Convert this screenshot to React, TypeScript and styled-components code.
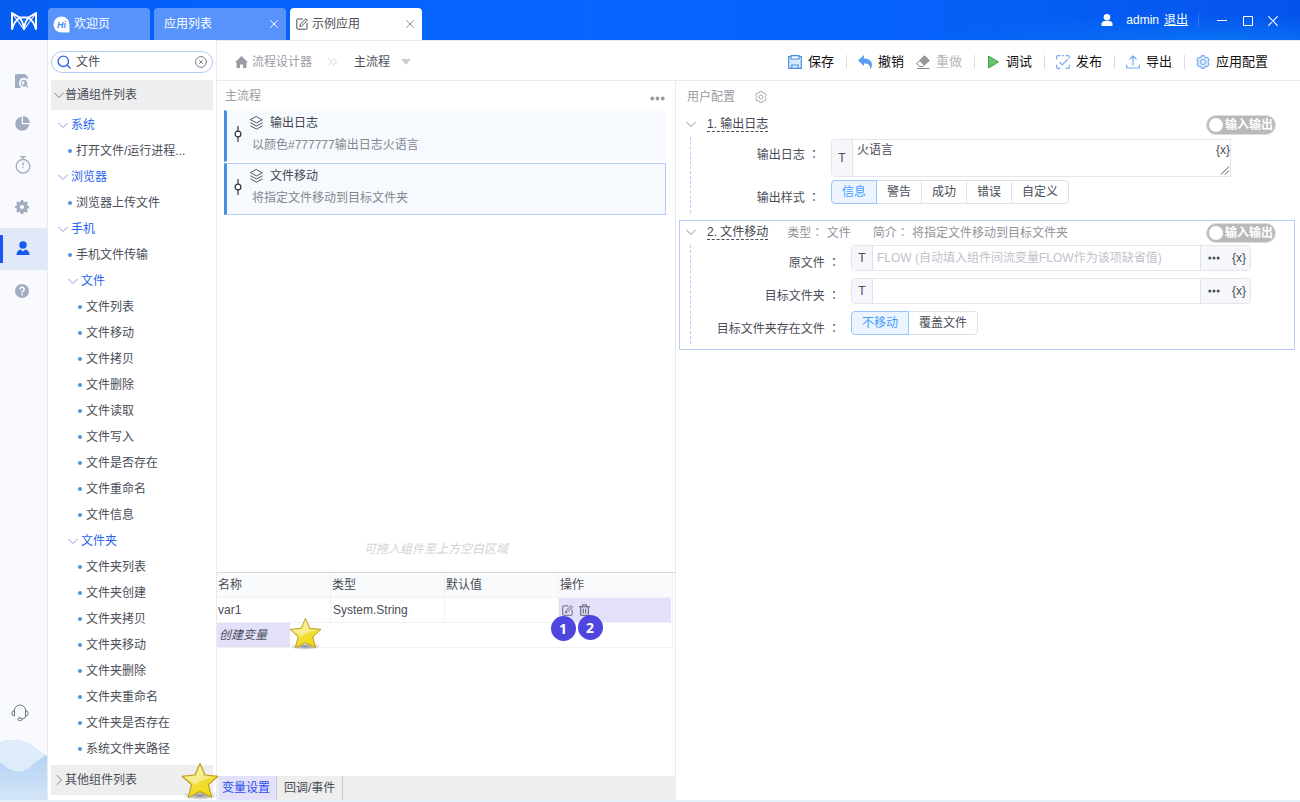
import React, { useState } from "react";
import styled, { createGlobalStyle, css } from "styled-components";

const Global = createGlobalStyle`
  *, *::before, *::after { box-sizing: border-box; }
  body {
    margin: 0;
    background: #fff;
    color: #4a4d57;
    font: 12px/20px "Liberation Sans", "Noto Sans CJK SC", sans-serif;
  }
  button, input, textarea { font: inherit; color: inherit; }
  button { margin: 0; padding: 0; border: 0; background: none; cursor: pointer; }
  ul { list-style: none; margin: 0; padding: 0; }
  h2, h3, p { margin: 0; font: inherit; }
  svg { display: block; flex: none; }
`;

/* ---------- window frame ---------- */

const Page = styled.div`
  display: flex;
  flex-direction: column;
  min-height: 100vh;
  border-bottom: 2px solid #e6f2fa;
`;

const TopBar = styled.header`
  display: flex;
  height: 40px;
  color: #fff;
  background:
    radial-gradient(ellipse 300px 30px at 94% 110%, #0a74f4 0%, transparent 100%),
    linear-gradient(90deg, #075cf0 0%, #0560fb 12%, #0666fd 45%, #0560f8 75%, #0553ec 100%);
`;

const Logo = styled.div`
  display: flex;
  align-items: center;
  width: 48px;
  padding: 2px 0 0 10px;
`;

const WindowTabs = styled.nav`
  display: flex;
  align-items: flex-end;
  gap: 4px;
`;

const WindowTab = styled.div<{ $active?: boolean; $narrow?: boolean }>`
  display: flex;
  align-items: center;
  gap: 4px;
  width: ${(p) => (p.$narrow ? 102 : 132)}px;
  height: 32px;
  padding: 0 8px 0 ${(p) => (p.$active ? 6 : p.$narrow ? 5 : 10)}px;
  border-radius: 4px 4px 0 0;
  background: ${(p) => (p.$active ? "#fff" : "#5793fb")};
  color: ${(p) => (p.$active ? "#4a4d57" : "#fff")};
`;

const TabClose = styled.button<{ $warm?: boolean }>`
  margin-left: auto;
  color: ${(p) => (p.$warm ? "#a0917c" : "#fff")};
`;

const Account = styled.div`
  display: flex;
  align-items: center;
  margin-left: auto;
  padding-right: 22px;
`;

const AccountName = styled.span`
  margin: 0 5px 0 13px;
`;

const LogoutLink = styled.a`
  color: #fff;
  text-decoration: underline;
`;

const WindowButtons = styled.div`
  display: flex;
  gap: 14px;
  margin-left: 10px;
  padding: 2px 0 0 17px;
  border-left: 1px solid #2f77f5;
`;

/* ---------- body ---------- */

const Body = styled.div`
  display: flex;
  flex: 1;
`;

const Rail = styled.nav`
  display: flex;
  flex-direction: column;
  flex: 0 0 48px;
  padding-top: 20px;
  border-right: 1px solid #ebebee;
  background: #f8fafd;
`;

const RailButton = styled.button<{ $active?: boolean }>`
  position: relative;
  display: flex;
  align-items: center;
  height: 42px;
  padding-left: 15px;
  color: ${(p) => (p.$active ? "#1759f0" : "#a3adc2")};
  background: ${(p) => (p.$active ? "#e1e8f8" : "transparent")};
  ${(p) =>
    p.$active &&
    css`
      &::before {
        content: "";
        position: absolute;
        left: 0;
        top: 7px;
        width: 3px;
        height: 28px;
        background: #1759f0;
      }
    `}
`;

const SupportButton = styled.button`
  margin: auto 0 18px;
  padding-left: 11px;
  color: #6d7484;
`;

const Library = styled.aside`
  display: flex;
  flex-direction: column;
  flex: none;
  width: 169px;
  padding: 11px 3px 5px;
  border-right: 1px solid #ebebee;
`;

const SearchBox = styled.label`
  display: flex;
  align-items: center;
  height: 22px;
  padding: 0 5px;
  border: 1px solid #b1cbfb;
  border-radius: 11px;
`;

const SearchInput = styled.input`
  flex: 1;
  min-width: 0;
  padding: 0 5px;
  border: 0;
  outline: 0;
  background: none;
`;

const LibraryHeading = styled.button<{ $end?: boolean }>`
  position: relative;
  display: flex;
  align-items: center;
  gap: 1px;
  height: 30px;
  margin-top: ${(p) => (p.$end ? "auto" : "7px")};
  padding-left: 3px;
  background: #eee;
  flex: none;
  svg { color: #7c7f88; }
`;

const Tree = styled.ul`
  padding: 2px 0 3px;
`;

const Branch = styled.li<{ $deep?: boolean }>`
  display: flex;
  align-items: center;
  gap: 3px;
  height: 26px;
  padding-left: ${(p) => (p.$deep ? 17 : 7)}px;
  color: #2a63ee;
  svg { color: #9a8fe0; }
`;

const Leaf = styled.li<{ $deep?: boolean }>`
  display: flex;
  align-items: center;
  gap: 4px;
  height: 26px;
  padding-left: ${(p) => (p.$deep ? 27 : 17)}px;
  &::before {
    content: "";
    width: 4px;
    height: 4px;
    border-radius: 50%;
    background: #4b93dd;
  }
`;

const Designer = styled.main`
  display: flex;
  flex-direction: column;
  flex: 1;
  min-width: 0;
`;

const ToolBar = styled.div`
  display: flex;
  align-items: center;
  height: 41px;
  padding: 2px 32px 0 18px;
  border-top: 1px solid #ebebee;
  border-bottom: 1px solid #ebebee;
`;

const Crumbs = styled.nav`
  display: flex;
  align-items: center;
  color: #999ba3;
`;

const CrumbHome = styled.a`
  display: flex;
  align-items: center;
  gap: 4px;
  margin-right: 16px;
  color: inherit;
  text-decoration: none;
`;

const CrumbFlow = styled.button`
  display: flex;
  align-items: center;
  gap: 11px;
  margin-left: 16px;
  color: #4a4d57;
`;

const Actions = styled.div`
  display: flex;
  align-items: center;
  gap: 12px;
  margin-left: auto;
  font-size: 13px;
`;

const Action = styled.button`
  display: flex;
  align-items: center;
  gap: 6px;
  color: #111;
  white-space: nowrap;
  &:disabled { color: #b9b9b9; cursor: default; }
`;

const Divider = styled.span`
  width: 1px;
  height: 14px;
  margin-right: -1px;
  background: #dcdcdc;
`;

const Work = styled.div`
  display: flex;
  flex: 1;
`;

/* ---------- flow column ---------- */

const FlowColumn = styled.section`
  display: flex;
  flex-direction: column;
  flex: none;
  width: 459px;
  border-right: 1px solid #ebebee;
`;

const PaneHeading = styled.div`
  display: flex;
  align-items: center;
  justify-content: space-between;
  height: 29px;
  padding: 0 10px 0 8px;
  color: #999ba3;
`;

const MoreButton = styled.button`
  margin-top: 6px;
`;

const FlowList = styled.ol`
  display: grid;
  gap: 1px;
  margin: 0 9px 0 7px;
  padding: 0;
  list-style: none;
`;

const FlowStep = styled.li<{ $selected?: boolean }>`
  display: flex;
  align-items: center;
  gap: 8px;
  height: 52px;
  padding: 0 0 4px 7px;
  border: 1px solid ${(p) => (p.$selected ? "#b5cdfb" : "#fff")};
  border-left: 3px solid #4c8fdf;
  background: #f6f9fe;
  background-clip: padding-box;
`;

const StepText = styled.div`
  line-height: 22px;
  color: #848790;
`;

const StepTitle = styled.h3`
  display: flex;
  align-items: center;
  gap: 7px;
  color: #42454f;
`;

const StepNote = styled.p`
  padding-left: 2px;
`;

const DropHint = styled.p`
  margin: auto 0 13px;
  padding-right: 20px;
  text-align: center;
  font-style: italic;
  color: #d2d2d2;
`;

const Variables = styled.div`
  flex: 0 0 204px;
  padding-right: 2px;
  border-top: 1px solid #d6d8da;
`;

const VarTable = styled.table`
  width: 100%;
  table-layout: fixed;
  border-collapse: separate;
  border-spacing: 0;
  th, td {
    height: 25px;
    padding: 0 1px;
    border: solid #f1f2f3;
    border-width: 0 1px 1px 0;
    text-align: left;
    font-weight: 400;
  }
  th { background: #f9fafb; }
  td + td { padding-left: 2px; }
`;

const ToolCell = styled.div`
  display: flex;
  align-items: center;
  gap: 6px;
  height: 24px;
  margin-left: -2px;
  padding-left: 3px;
  background: #e3e0fa;
  color: #5c5a6c;
`;

const CreateRow = styled.div`
  position: relative;
  display: flex;
  height: 24px;
  margin-left: -1px;
`;

const CreateButton = styled.button`
  width: 73px;
  padding-left: 2px;
  text-align: left;
  font-style: italic;
  background: #e3e0fa;
`;

const IconButton = styled.button`
  position: relative;
`;

const Badge = styled.span`
  position: absolute;
  left: 50%;
  top: 11px;
  width: 25px;
  height: 25px;
  margin: 0 0 0 -17px;
  border-radius: 50%;
  background: #4f46e0;
  color: #fff;
  text-align: center;
  font: 700 14px/25px "Open Sans", sans-serif;
`;

const SecondBadge = styled(Badge)`
  margin-left: -7px;
`;

const StarSlot = styled.span<{ $corner?: boolean }>`
  position: absolute;
  ${(p) =>
    p.$corner
      ? css`
          right: -6px;
          top: -3px;
        `
      : css`
          left: 72px;
          top: -6px;
        `}
  z-index: 2;
`;

const BottomTabs = styled.div`
  display: flex;
  height: 24px;
  padding-left: 2px;
  background: #eee;
`;

const BottomTab = styled.button<{ $active?: boolean }>`
  padding: 0 ${(p) => (p.$active ? 6 : 7)}px 0 ${(p) => (p.$active ? 3 : 7)}px;
  border-right: 1px solid #c9c9c9;
  background: ${(p) => (p.$active ? "#e3e0fa" : "transparent")};
  color: ${(p) => (p.$active ? "#2a50ee" : "#4a4d57")};
`;

/* ---------- settings column ---------- */

const Settings = styled.section`
  flex: 1;
  min-width: 0;
  padding: 0 5px 0 3px;
`;

const SettingsHeading = styled.div`
  display: flex;
  align-items: center;
  gap: 20px;
  height: 31px;
  padding-left: 8px;
  color: #999ba3;
`;

const Block = styled.section<{ $selected?: boolean }>`
  margin-bottom: 1px;
  padding-bottom: 5px;
  border: 1px solid ${(p) => (p.$selected ? "#b5cdfb" : "transparent")};
`;

const BlockHead = styled.header`
  display: flex;
  align-items: center;
  height: 24px;
  padding: 0 18px 2px 6px;
  color: #92949b;
  & > svg { color: #98907f; }
`;

const BlockTitle = styled.h3`
  margin: 0 19px 0 11px;
  border-bottom: 1px dashed #4a4d57;
  line-height: 14px;
  color: #42454f;
`;

const Fact = styled.span`
  margin-right: 22px;
`;

const Switch = styled.label`
  display: flex;
  align-items: center;
  gap: 1px;
  height: 20px;
  margin: 1px 0 0 auto;
  padding: 0 2px 0 1px;
  border: 1px solid #dcdcdc;
  border-radius: 10px;
  background: #b9b9b9;
  color: #fff;
  font-weight: 700;
  line-height: 18px;
`;

const SwitchKnob = styled.input`
  appearance: none;
  width: 16px;
  height: 16px;
  margin: 0;
  border: 1px solid #b9b9b9;
  border-radius: 50%;
  background: #fff;
`;

const BlockBody = styled.div<{ $gap: number; $inset?: number }>`
  display: grid;
  gap: ${(p) => p.$gap}px;
  margin-left: 10px;
  padding: ${(p) => p.$inset ?? 0}px 0 9px;
  border-left: 1px dashed #b5cdfb;
`;

const Row = styled.div<{ $labelWidth: number; $multiline?: boolean }>`
  display: grid;
  grid-template-columns: ${(p) => p.$labelWidth}px minmax(0, 400px);
  & > :first-child {
    padding-right: 11px;
    text-align: right;
    line-height: ${(p) => (p.$multiline ? 30 : 34)}px;
    height: 24px;
    white-space: nowrap;
  }
`;

const Colon = styled.span`
  font-family: "Noto Sans CJK TC", sans-serif;
`;

const FieldBox = styled.div<{ $multiline?: boolean }>`
  display: flex;
  height: ${(p) => (p.$multiline ? 38 : 26)}px;
  border: 1px solid #e4e6ec;
  border-radius: ${(p) => (p.$multiline ? "4px 0 0 4px" : "4px")};
`;

const TypeButton = styled.button`
  flex: 0 0 21px;
  border-right: 1px solid #dfe2ea;
  border-radius: 3px 0 0 3px;
  background: #f5f7fb;
`;

const TextInput = styled.input`
  flex: 1;
  min-width: 0;
  padding: 0 4px;
  border: 0;
  outline: 0;
  background: none;
  &::placeholder { color: #c0c3cc; opacity: 1; }
`;

const TextArea = styled.textarea`
  flex: 1;
  padding: 0 4px;
  border: 0;
  outline: 0;
  background: none;
  resize: none;
`;

const AreaTools = styled.div`
  display: flex;
  flex-direction: column;
  align-items: flex-end;
  justify-content: space-between;
  padding-bottom: 1px;
`;

const FieldTools = styled.div`
  display: flex;
  align-items: center;
  gap: 12px;
  padding: 0 4px 0 7px;
  border-left: 1px solid #dfe2ea;
  border-radius: 0 3px 3px 0;
  background: #f5f7fb;
`;

const Choices = styled.div`
  display: flex;
  justify-self: start;
  height: 24px;
`;

const Choice = styled.label`
  margin-left: -1px;
  padding: 0 10px;
  border: 1px solid #dfe0e8;
  line-height: 22px;
  cursor: pointer;
  &:first-child { margin-left: 0; border-radius: 4px 0 0 4px; }
  &:last-child { border-radius: 0 4px 4px 0; }
  &:has(input:checked) {
    position: relative;
    border-color: #96c4fb;
    background: #ecf4ff;
    color: #409eff;
  }
`;

const HiddenRadio = styled.input`
  position: absolute;
  appearance: none;
  width: 0;
  height: 0;
  margin: 0;
`;

/* ---------- drawings ---------- */

const line = { fill: "none", stroke: "currentColor", strokeLinecap: "round", strokeLinejoin: "round" } as const;

const Chevron = ({ side }: { side?: boolean }) => (
  <svg width="10" height="10" viewBox="0 0 10 10" {...line}>
    <path d={side ? "M3 .5 7.500 5 3 9.500" : "M.5 3 5 7.500 9.500 3"} />
  </svg>
);

const Cross = ({ size = 8 }: { size?: number }) => (
  <svg width={size} height={size} viewBox="0 0 10 10" {...line} strokeWidth="1.200">
    <path d="M.7.7 9.300 9.300M9.300.7.7 9.300" />
  </svg>
);

const LogoMark = () => (
  <svg width="28" height="20" viewBox="0 0 28 20" fill="none" stroke="#fff" strokeLinejoin="round">
    <path d="M2 18.500V2L9.500 6.500H18.500L26 2V18.500" strokeWidth="2" />
    <path d="M2 18.500Q4.500 9.500 9.500 7 13 10 14 18 15 10 18.500 7 23.500 9.500 26 18.500" strokeWidth="1.800" />
    <path d="M2 2 14 18.500 26 2" strokeWidth="1.200" />
  </svg>
);

const HiMark = () => (
  <svg width="17" height="17" viewBox="0 0 17 17">
    <path fill="#fff" d="M8.500.5a8 8 0 1 0 0 16H15a1.500 1.500 0 0 0 1.500-1.500V8.500a8 8 0 0 0-8-8Z" />
    <text x="4" y="12" fill="#4a8bfa" fontSize="9" fontWeight="700" fontStyle="italic" fontFamily="Liberation Sans, sans-serif">Hi</text>
  </svg>
);

const EditIcon = ({ size = 12 }: { size?: number }) => (
  <svg width={size} height={size} viewBox="0 0 12 12" {...line}>
    <path d="M6.500 1H1.500a.7.7 0 0 0-.7.7v8.800a.7.7 0 0 0 .7.7h8.800a.7.7 0 0 0 .7-.7V5.500" />
    <path d="M4 8.200 4.300 6.200 9.800.8 11.300 2.300 5.900 7.700Z" />
  </svg>
);

const TrashIcon = () => (
  <svg width="11" height="12" viewBox="0 0 11 12" {...line}>
    <path d="M.5 2.800h10M3.500 2.500V.8h4v1.700M1.700 3v8.300h7.600V3M4.300 5v4M6.700 5v4" />
  </svg>
);

const UserIcon = () => (
  <svg width="12" height="12" viewBox="0 0 12 12" fill="#fff">
    <circle cx="6" cy="3.300" r="3.300" />
    <path d="M.5 12V9.800C.5 8 2 7.200 3.500 6.900h5c1.500.3 3 1.100 3 2.900V12Z" />
  </svg>
);

const SearchIcon = () => (
  <svg width="14" height="14" viewBox="0 0 14 14" fill="none" stroke="#2a63ee" strokeWidth="1.400">
    <circle cx="6.300" cy="6.300" r="5.200" />
    <path d="m10.200 10.200 3.300 3.300" />
  </svg>
);

const ClearIcon = () => (
  <svg width="12" height="12" viewBox="0 0 12 12" {...line} stroke="#7b7e87">
    <circle cx="6" cy="6" r="5.400" />
    <path d="m4.500 4.500 3 3M7.500 4.500 4.500 7.500" />
  </svg>
);

const Dots = ({ size = 5 }: { size?: number }) => (
  <svg width={size * 3} height={size} viewBox="0 0 15 5" fill="currentColor">
    <circle cx="2.300" cy="2.500" r="1.900" />
    <circle cx="7.500" cy="2.500" r="1.900" />
    <circle cx="12.700" cy="2.500" r="1.900" />
  </svg>
);

const GearOutline = ({ size, color, fill = "none", width = 1 }: { size: number; color: string; fill?: string; width?: number }) => (
  <svg width={size} height={size} viewBox="0 0 14 14" fill={fill} stroke={color} strokeWidth={width} strokeLinejoin="round">
    <path d="M5.500.7h3l.5 1.500 1.100.6 1.600-.4 1.500 2.500-1 1.300v1.600l1 1.300-1.500 2.500-1.600-.4-1.100.6-.5 1.500h-3L5 11.800l-1.100-.6-1.600.4L.8 9.100l1-1.300V6.200l-1-1.300 1.500-2.500 1.600.4L5 2.200Z" />
    <circle cx="7" cy="7" r="2.400" fill="#fff" />
  </svg>
);

const LayersIcon = () => (
  <svg width="13" height="14" viewBox="0 0 13 14" {...line} strokeWidth=".9">
    <path d="M6.500.7 12.300 3.800 6.500 6.900.7 3.800ZM.7 6.900 6.500 10l5.800-3.100M.7 10l5.800 3.100L12.300 10" />
  </svg>
);

const NodeIcon = () => (
  <svg width="8" height="16" viewBox="0 0 8 16" fill="#fff" stroke="#30333b" strokeWidth="1.200">
    <path d="M4 0v16" />
    <circle cx="4" cy="8" r="2.900" />
  </svg>
);

const Star = ({ size, id }: { size: number; id: string }) => (
  <svg width={size} height={size} viewBox="0 0 36 36">
    <defs>
      <linearGradient id={`${id}-gold`} x1="0" y1="0" x2=".6" y2="1">
        <stop offset="0" stopColor="#fdf7a8" />
        <stop offset=".5" stopColor="#f0e04a" />
        <stop offset="1" stopColor="#f2d80c" />
      </linearGradient>
      <radialGradient id={`${id}-shade`}>
        <stop offset="0" stopColor="#000" stopOpacity=".45" />
        <stop offset="1" stopColor="#000" stopOpacity="0" />
      </radialGradient>
    </defs>
    <ellipse cx="18" cy="32" rx="17" ry="4" fill={`url(#${id}-shade)`} />
    <path d="M18 1.500 22.800 12.300 35 13.500 26 21.500 29 33.500 18 28 7 33.500 10 21.500 1 13.500 13.200 12.300Z" fill={`url(#${id}-gold)`} stroke="#b99a1c" strokeWidth="1" strokeLinejoin="round" />
    <path d="M18 4 21.700 13.500 32 14.300Q22 15 12 22L13 21 4 14.500 14.300 13.500Z" fill="#fff" opacity=".4" />
  </svg>
);

const Wave = () => (
  <svg width="47" height="60" viewBox="0 0 47 60">
    <defs>
      <linearGradient id="wave-deep" x1="0" y1="0" x2="0" y2="1">
        <stop offset="0" stopColor="#b4d3f3" />
        <stop offset="1" stopColor="#d3e4f8" />
      </linearGradient>
    </defs>
    <path d="M0 2Q20-5 36 8L47 16V60H0Z" fill="#deebf9" />
    <path d="M0 22Q16 38 30 27 40 18 47 15V60H0Z" fill="url(#wave-deep)" />
  </svg>
);

const railIcons = [
  <svg key="doc" width="14" height="14" viewBox="0 0 14 14" fill="currentColor">
    <path d="M1 0h9l3 3v2.500A4.800 4.800 0 0 0 5.200 12.500L6 14H1a1 1 0 0 1-1-1V1a1 1 0 0 1 1-1Z" />
    <path d="M9 5.800a3.300 3.300 0 1 0 1.700 6.100l1.900 1.900 1-1-1.900-1.900A3.300 3.300 0 0 0 9 5.800Zm0 1.500.9.900L8.600 9.500l.9.900a1.800 1.800 0 1 1-.5-3.100Z" />
  </svg>,
  <svg key="pie" width="15" height="15" viewBox="0 0 15 15" fill="currentColor">
    <path d="M6.700.8A7 7 0 1 0 14.200 8.300H6.700Z" />
    <path d="M8 0a7 7 0 0 1 6.800 7H8Z" />
  </svg>,
  <svg key="timer" width="16" height="18" viewBox="0 0 16 18" fill="none" stroke="currentColor" strokeWidth="1.400">
    <circle cx="8" cy="10.300" r="6.800" />
    <path d="M5 .8h6M8 1v2.500M8 6.500v3.300M8 11v1.300" />
  </svg>,
  <svg key="gear" width="14" height="14" viewBox="0 0 14 14" fill="currentColor" fillRule="evenodd">
    <path d="M5.800 0h2.400l.5 1.900 1 .4L11.400 1.300l1.500 1.600-1 1.600.4 1 1.700.4v2.300l-1.700.4-.4 1 1 1.700-1.600 1.500-1.600-1-1 .4-.5 1.800H5.800l-.5-1.800-1-.4-1.700 1-1.500-1.500 1-1.700-.4-1L0 8.200V5.900l1.700-.4.4-1-1-1.600 1.500-1.600 1.700 1 1-.4ZM7 4.900a2.100 2.100 0 1 0 0 4.200 2.100 2.100 0 0 0 0-4.200Z" />
  </svg>,
  <svg key="person" width="16" height="16" viewBox="0 0 16 16" fill="currentColor">
    <circle cx="8" cy="4" r="3.700" />
    <path d="M1.500 14C1.500 10.500 3.500 9 5.500 8.500L8 10.500 10.500 8.500c2 .5 4 2 4 5.500Z" />
  </svg>,
  <svg key="help" width="14" height="14" viewBox="0 0 14 14" fill="none">
    <circle cx="7" cy="7" r="7" fill="currentColor" />
    <path d="M4.900 5.500A2.100 2.100 0 1 1 7.800 7.300Q7 7.700 7 8.700" stroke="#fff" strokeWidth="1.500" />
    <circle cx="7" cy="10.600" r=".9" fill="#fff" />
  </svg>,
];
const railNames = ["检索", "统计", "定时", "设置", "应用", "帮助"];

const SaveIcon = () => (
  <svg width="14" height="14" viewBox="0 0 14 14" fill="#d8e8fc" stroke="#4a90e0" strokeWidth="1.200">
    <path d="M.7 1.500H3V.7h8v.8h2.300v11.800H.7ZM3 1.500V4h8V1.500M3.800 13.300V10h6.400v3.300" />
  </svg>
);
const UndoIcon = () => (
  <svg width="14" height="14" viewBox="0 0 14 14" fill="#5b9cf0">
    <path d="M6 0v3.500c5 0 8 2.500 8 6.500 0 1.700-.8 3-2 4 .5-4-1.500-5.500-6-5.500V11L0 5.500Z" />
  </svg>
);
const EraserIcon = () => (
  <svg width="14" height="14" viewBox="0 0 14 14" stroke="#8c8c8c">
    <path d="M8.500.8 13.300 5.600 6.500 11.500H3.500L.8 8.500Z" fill="#999" />
    <path d="M3.800 5.500 8.300 10 6.500 11.500H3.500L.8 8.500Z" fill="#fff" />
    <path d="M1 13.500h12.500" />
  </svg>
);
const PlayIcon = () => (
  <svg width="14" height="14" viewBox="0 0 14 14" fill="#66c56c" stroke="#3ba345">
    <path d="M2.500 1 12.500 7 2.500 13Z" />
  </svg>
);
const PublishIcon = () => (
  <svg width="14" height="14" viewBox="0 0 14 14" {...line} stroke="#74abf5" strokeWidth="1.200">
    <path d="M.7 4V1.700a1 1 0 0 1 1-1H4M6.500.7h1M10 .7h2.300a1 1 0 0 1 1 1V3M13.300 10v2.300a1 1 0 0 1-1 1H10M4 13.300H1.700a1 1 0 0 1-1-1V10M4 7.500 6.300 9.800 11.500 4.500" />
  </svg>
);
const ExportIcon = () => (
  <svg width="14" height="14" viewBox="0 0 14 14" {...line} stroke="#74abf5" strokeWidth="1.200">
    <path d="M7 10V1.200M3.800 4.200 7 1l3.200 3.200M.7 10v3h12.600v-3" />
  </svg>
);

/* ---------- data ---------- */

type TreeNode = { name: string; branch?: boolean; deep?: boolean };
const tree: TreeNode[] = [
  { name: "系统", branch: true },
  { name: "打开文件/运行进程..." },
  { name: "浏览器", branch: true },
  { name: "浏览器上传文件" },
  { name: "手机", branch: true },
  { name: "手机文件传输" },
  { name: "文件", branch: true, deep: true },
  ...["文件列表", "文件移动", "文件拷贝", "文件删除", "文件读取", "文件写入", "文件是否存在", "文件重命名", "文件信息"].map((name) => ({ name, deep: true })),
  { name: "文件夹", branch: true, deep: true },
  ...["文件夹列表", "文件夹创建", "文件夹拷贝", "文件夹移动", "文件夹删除", "文件夹重命名", "文件夹是否存在", "系统文件夹路径"].map((name) => ({ name, deep: true })),
];

const steps = [
  { title: "输出日志", note: "以颜色#777777输出日志火语言" },
  { title: "文件移动", note: "将指定文件移动到目标文件夹", selected: true },
];

function ChoiceGroup({ name, options }: { name: string; options: string[] }) {
  const [value, setValue] = useState(options[0]);
  return (
    <Choices role="radiogroup" aria-label={name}>
      {options.map((o) => (
        <Choice key={o}>
          <HiddenRadio type="radio" name={name} checked={value === o} onChange={() => setValue(o)} />
          {o}
        </Choice>
      ))}
    </Choices>
  );
}

function InOutSwitch() {
  return (
    <Switch>
      <SwitchKnob type="checkbox" role="switch" />
      输入输出
    </Switch>
  );
}

function PathField({ id, label, placeholder }: { id: string; label: string; placeholder?: string }) {
  return (
    <Row $labelWidth={160}>
      <label htmlFor={id}>{label} <Colon>：</Colon></label>
      <FieldBox>
        <TypeButton>T</TypeButton>
        <TextInput id={id} placeholder={placeholder} />
        <FieldTools>
          <button aria-label="选择"><Dots size={4} /></button>
          <button>{"{x}"}</button>
        </FieldTools>
      </FieldBox>
    </Row>
  );
}

export default function App() {
  return (
    <Page>
      <Global />
      <TopBar>
        <Logo><LogoMark /></Logo>
        <WindowTabs>
          <WindowTab $narrow><HiMark />欢迎页</WindowTab>
          <WindowTab>应用列表<TabClose aria-label="关闭"><Cross /></TabClose></WindowTab>
          <WindowTab $active><EditIcon />示例应用<TabClose $warm aria-label="关闭"><Cross /></TabClose></WindowTab>
        </WindowTabs>
        <Account>
          <UserIcon />
          <AccountName>admin</AccountName>
          <LogoutLink href="#logout">退出</LogoutLink>
          <WindowButtons>
            <button aria-label="最小化"><svg width="12" height="12" stroke="#fff"><path d="M1 5.500h10" /></svg></button>
            <button aria-label="最大化"><svg width="12" height="12" stroke="#fff" fill="none"><path d="M1.500 1.500h9v9h-9Z" /></svg></button>
            <button aria-label="关闭窗口"><Cross size={10} /></button>
          </WindowButtons>
        </Account>
      </TopBar>

      <Body>
        <Rail>
          {railIcons.map((icon, i) => (
            <RailButton key={railNames[i]} aria-label={railNames[i]} $active={i === 4}>{icon}</RailButton>
          ))}
          <SupportButton aria-label="客服">
            <svg width="18" height="18" viewBox="0 0 18 18" {...line}>
              <path d="M3 7a6 6 0 0 1 12 0M3.500 6.800v5H3a2 2 0 0 1-2-2V8.800a2 2 0 0 1 2-2ZM14.500 6.800v5h.5a2 2 0 0 0 2-2V8.800a2 2 0 0 0-2-2ZM15 12q-.5 2.800-4 3.300" />
              <rect x="7" y="14" width="4" height="2.500" rx="1.200" />
            </svg>
          </SupportButton>
          <Wave />
        </Rail>

        <Library>
          <SearchBox>
            <SearchIcon />
            <SearchInput aria-label="搜索组件" defaultValue="文件" />
            <ClearIcon />
          </SearchBox>
          <LibraryHeading><Chevron />普通组件列表</LibraryHeading>
          <Tree>
            {tree.map((n) =>
              n.branch ? (
                <Branch key={n.name} $deep={n.deep}><Chevron />{n.name}</Branch>
              ) : (
                <Leaf key={n.name} $deep={n.deep}>{n.name}</Leaf>
              )
            )}
          </Tree>
          <LibraryHeading $end>
            <Chevron side />其他组件列表
            <StarSlot $corner><Star size={38} id="library-star" /></StarSlot>
          </LibraryHeading>
        </Library>

        <Designer>
          <ToolBar>
            <Crumbs>
              <CrumbHome href="#designer">
                <svg width="13" height="12" viewBox="0 0 13 12" fill="currentColor"><path d="M6.500 0 13 6.300h-1.500V12H8V8.500H5V12H1.500V6.300H0Z" /></svg>
                流程设计器
              </CrumbHome>
              <svg width="10" height="8" viewBox="0 0 10 8" {...line} stroke="#d0d2d8"><path d="M.8.8 4.200 4 .8 7.200M5.300.8 8.700 4 5.300 7.200" /></svg>
              <CrumbFlow>
                主流程
                <svg width="10" height="6" viewBox="0 0 10 6" fill="#cbcdd2"><path d="M0 0h10L5 6Z" /></svg>
              </CrumbFlow>
            </Crumbs>
            <Actions>
              <Action><SaveIcon />保存</Action>
              <Divider />
              <Action><UndoIcon />撤销</Action>
              <Action disabled><EraserIcon />重做</Action>
              <Divider />
              <Action><PlayIcon />调试</Action>
              <Divider />
              <Action><PublishIcon />发布</Action>
              <Divider />
              <Action><ExportIcon />导出</Action>
              <Divider />
              <Action><GearOutline size={14} color="#5b9cf0" fill="#d8e8fc" />应用配置</Action>
            </Actions>
          </ToolBar>

          <Work>
            <FlowColumn>
              <PaneHeading>
                <h2>主流程</h2>
                <MoreButton aria-label="更多"><Dots /></MoreButton>
              </PaneHeading>
              <FlowList>
                {steps.map((s) => (
                  <FlowStep key={s.title} $selected={s.selected}>
                    <NodeIcon />
                    <StepText>
                      <StepTitle><LayersIcon />{s.title}</StepTitle>
                      <StepNote>{s.note}</StepNote>
                    </StepText>
                  </FlowStep>
                ))}
              </FlowList>
              <DropHint>可拖入组件至上方空白区域</DropHint>
              <Variables>
                <VarTable>
                  <thead>
                    <tr><th>名称</th><th>类型</th><th>默认值</th><th>操作</th></tr>
                  </thead>
                  <tbody>
                    <tr>
                      <td>var1</td>
                      <td>System.String</td>
                      <td />
                      <td>
                        <ToolCell>
                          <IconButton aria-label="编辑"><EditIcon size={11} /><Badge>1</Badge></IconButton>
                          <IconButton aria-label="删除"><TrashIcon /><SecondBadge>2</SecondBadge></IconButton>
                        </ToolCell>
                      </td>
                    </tr>
                    <tr>
                      <td colSpan={4}>
                        <CreateRow>
                          <CreateButton>创建变量</CreateButton>
                          <StarSlot><Star size={33} id="create-star" /></StarSlot>
                        </CreateRow>
                      </td>
                    </tr>
                  </tbody>
                </VarTable>
              </Variables>
              <BottomTabs>
                <BottomTab $active>变量设置</BottomTab>
                <BottomTab>回调/事件</BottomTab>
              </BottomTabs>
            </FlowColumn>

            <Settings>
              <SettingsHeading>
                <h2>用户配置</h2>
                <GearOutline size={12} color="#999ba3" />
              </SettingsHeading>

              <Block>
                <BlockHead>
                  <Chevron />
                  <BlockTitle>1. 输出日志</BlockTitle>
                  <InOutSwitch />
                </BlockHead>
                <BlockBody $gap={3} $inset={2}>
                  <Row $labelWidth={140} $multiline>
                    <label htmlFor="log-text">输出日志 <Colon>：</Colon></label>
                    <FieldBox $multiline>
                      <TypeButton>T</TypeButton>
                      <TextArea id="log-text" defaultValue="火语言" />
                      <AreaTools>
                        <button>{"{x}"}</button>
                        <svg width="10" height="9" viewBox="0 0 10 9" stroke="#555"><path d="M1 8.500 9 .5M5 8.500 9 4.500" /></svg>
                      </AreaTools>
                    </FieldBox>
                  </Row>
                  <Row $labelWidth={140}>
                    <span>输出样式 <Colon>：</Colon></span>
                    <ChoiceGroup name="输出样式" options={["信息", "警告", "成功", "错误", "自定义"]} />
                  </Row>
                </BlockBody>
              </Block>

              <Block $selected>
                <BlockHead>
                  <Chevron />
                  <BlockTitle>2. 文件移动</BlockTitle>
                  <Fact>类型<Colon>：</Colon> 文件</Fact>
                  <Fact>简介<Colon>：</Colon> 将指定文件移动到目标文件夹</Fact>
                  <InOutSwitch />
                </BlockHead>
                <BlockBody $gap={7}>
                  <PathField id="source" label="原文件" placeholder="FLOW (自动填入组件间流变量FLOW作为该项缺省值)" />
                  <PathField id="target" label="目标文件夹" />
                  <Row $labelWidth={160}>
                    <span>目标文件夹存在文件 <Colon>：</Colon></span>
                    <ChoiceGroup name="目标文件夹存在文件" options={["不移动", "覆盖文件"]} />
                  </Row>
                </BlockBody>
              </Block>
            </Settings>
          </Work>
        </Designer>
      </Body>
    </Page>
  );
}
